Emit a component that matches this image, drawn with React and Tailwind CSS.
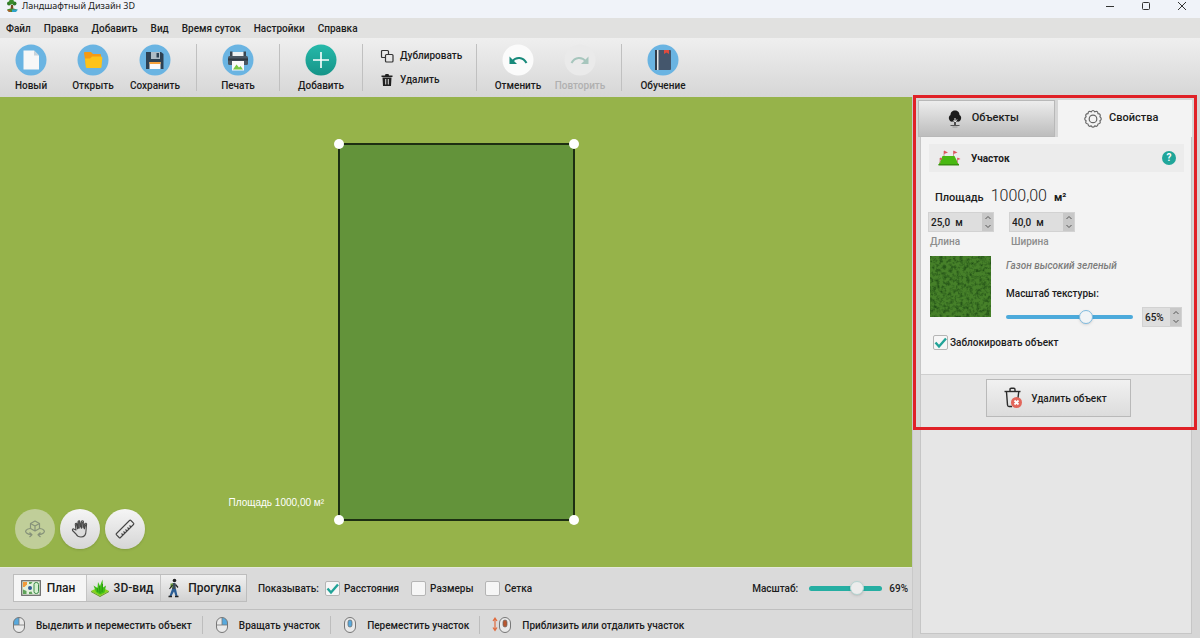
import React, { useState } from "react";

const NewFileIcon = () => (
  <svg viewBox="0 0 32 32" className="w-8 h-8" aria-hidden="true">
    <circle cx="16" cy="16" r="15.5" fill="#6ab4e2" />
    <path d="M8.500 6.500h10.500l5 5v14H8.500z" fill="#f7f7f7" />
    <path d="M19 6.500l5 5h-5z" fill="#c9d3da" />
  </svg>
);

const OpenIcon = () => (
  <svg viewBox="0 0 32 32" className="w-8 h-8" aria-hidden="true">
    <circle cx="16" cy="16" r="15.5" fill="#6ab4e2" />
    <path d="M7 9q0-1 1-1h6l2 2h7q1 0 1 1v11H9z" fill="#f59a12" />
    <path d="M8 14.500h5l2-2h9q1.500 0 1.300 1.500L24.500 23q-.2 1-1 1H10q-1 0-1.200-1z" fill="#fdc319" />
  </svg>
);

const SaveIcon = () => (
  <svg viewBox="0 0 32 32" className="w-8 h-8" aria-hidden="true">
    <circle cx="16" cy="16" r="15.5" fill="#6ab4e2" />
    <path d="M7 8h15l2.500 2v15H7z" fill="#2d4152" />
    <path d="M12 8h9v7h-9z" fill="#aebcc5" />
    <path d="M17.500 9H20v4.500h-2.500z" fill="#2d4152" />
    <path d="M10.500 18h11v7h-11z" fill="#fafafa" />
    <path d="M10.500 18h11v2h-11z" fill="#f5a13c" />
  </svg>
);

const PrintIcon = () => (
  <svg viewBox="0 0 32 32" className="w-8 h-8" aria-hidden="true">
    <circle cx="16" cy="16" r="15.5" fill="#6ab4e2" />
    <path d="M10 8h12v5H10z" fill="#eef1f2" />
    <path d="M8 7.500h2.500v5H8zM21.500 7.500H24v5h-2.500z" fill="#3a4651" />
    <rect x="6" y="12" width="20" height="9" rx="1.500" fill="#4a5763" />
    <path d="M6 14.500h20v2H6z" fill="#2d3740" />
    <path d="M10 17h12v9.500H10z" fill="#fbfbfb" />
    <path d="M11 25.500l3.500-5 2.500 3 1.500-1.500 2.500 3.500z" fill="#7ac943" />
  </svg>
);

const AddIcon = () => (
  <svg viewBox="0 0 32 32" className="w-8 h-8" aria-hidden="true">
    <defs>
      <linearGradient id="addFill" x1="0" y1="0" x2="0" y2="1">
        <stop offset="0" stopColor="#26b9aa" />
        <stop offset="1" stopColor="#159488" />
      </linearGradient>
    </defs>
    <circle cx="16" cy="16" r="15.5" fill="url(#addFill)" />
    <path d="M16 8v16M8 16h16" stroke="#fff" strokeWidth="1.600" />
  </svg>
);

const UndoIcon = () => (
  <svg viewBox="0 0 32 32" className="w-8 h-8" aria-hidden="true">
    <circle cx="16" cy="16" r="15.5" fill="#fbfbfb" />
    <path d="M10 17.500c4-5 11-5 14.500 1.500" fill="none" stroke="#17897a" strokeWidth="2" />
    <path d="M7.500 12.500v7.500H15z" fill="#17897a" />
  </svg>
);

const RedoIcon = () => (
  <svg viewBox="0 0 32 32" className="w-8 h-8" aria-hidden="true">
    <circle cx="16" cy="16" r="15.5" fill="#eaeaea" />
    <path d="M22 17.500c-4-5-11-5-14.500 1.500" fill="none" stroke="#a7c6bd" strokeWidth="2" />
    <path d="M24.500 12.500v7.500H17z" fill="#a7c6bd" />
  </svg>
);

const BookIcon = () => (
  <svg viewBox="0 0 32 32" className="w-8 h-8" aria-hidden="true">
    <circle cx="16" cy="16" r="15.5" fill="#6ab4e2" />
    <rect x="8" y="6" width="16" height="20" rx="1" fill="#44566c" />
    <path d="M8 6h2v20H8z" fill="#323d4a" />
    <path d="M10 6h1.500v20H10z" fill="#e6e6e6" />
    <path d="M17 6h5v4l-2.500-1.500L17 10z" fill="#df4b3e" />
  </svg>
);

const LogoIcon = () => (
  <svg viewBox="0 0 14 14" className="w-3.5 h-3.5" aria-hidden="true">
    <path d="M6 6h2l.5 5h-3z" fill="#7a4a21" />
    <circle cx="4" cy="4.500" r="2" fill="#2f7a26" />
    <circle cx="9.500" cy="4.500" r="2" fill="#2f7a26" />
    <circle cx="6.500" cy="3" r="2.500" fill="#3a8c2c" />
    <path d="M2 10.500q5-2 10 0l-2 2.500H4z" fill="#4a8a2a" />
    <path d="M7 10.500h6l-2 2.500H7z" fill="#2ea3c9" />
    <path d="M2 11h3l1 2H4z" fill="#a5642b" />
  </svg>
);

const DuplicateIcon = () => (
  <svg viewBox="0 0 14 14" className="w-3.5 h-3.5" fill="none" stroke="#333" strokeWidth="1.200" aria-hidden="true">
    <path d="M5.500 8.500H2.500q-1 0-1-1v-5q0-1 1-1h5q1 0 1 1v3" />
    <rect x="5.500" y="5.500" width="7.500" height="7.500" rx="1" />
  </svg>
);

const TrashIcon = () => (
  <svg viewBox="0 0 14 14" className="w-3.5 h-3.5" fill="#1f1f1f" aria-hidden="true">
    <path d="M1.500 2.500h3.500L5.500 1h3l.5 1.500h3.500V4h-11z" />
    <path fillRule="evenodd" d="M2.500 4.500h9L11 13H3zM5.200 6v5.500h1V6zM7.800 6v5.500h1V6z" />
  </svg>
);

const TreeIcon = () => (
  <svg viewBox="0 0 18 20" className="w-[18px] h-5" aria-hidden="true">
    <path d="M9 1.500c3.500 0 4.500 2.500 4.500 4.500 1.500 1 2 2.500 1.500 4-.5 2-2 3-4 2.500H7C5 13 3.500 12 3 10c-.5-1.500 0-3 1.500-4 0-2 1-4.500 4.500-4.500z" fill="#1d1d1d" />
    <path d="M9 16.500V9M9 13l2-2.500M9 12.500L7.500 11" stroke="#f0f0f0" strokeWidth="1" />
    <path d="M9 17v-4" stroke="#1d1d1d" strokeWidth="1.500" />
    <path d="M4.500 16.500h9" stroke="#555" strokeWidth="1" />
    <path d="M6.500 18h5" stroke="#999" strokeWidth="1" />
  </svg>
);

const GearIcon = () => (
  <svg viewBox="0 0 20 20" className="w-5 h-5" fill="none" stroke="#666" strokeWidth="1.200" aria-hidden="true">
    <path
      d="M8.200 2.800Q10 .200 11.800 2.800 14.700 1.400 15 4.600 18.200 4.800 16.900 7.800 19.600 10 16.900 11.700 18.200 14.800 15 15 14.700 18.200 11.800 16.900 10 19.600 8.200 16.900 5.300 18.200 5 15 1.800 14.800 3.100 11.700.4 10 3.100 7.800 1.800 4.800 5 4.600 5.300 1.400 8.200 2.800z"
      strokeLinejoin="round"
    />
    <circle cx="10" cy="9.900" r="3.800" />
  </svg>
);

const PlotIcon = () => (
  <svg viewBox="0 0 24 18" className="w-6 h-[18px]" aria-hidden="true">
    <path d="M5.500 7h12l4.500 9H1.500z" fill="#49b812" />
    <path d="M1.500 15H22v1.500H1.500z" fill="#389010" />
    <path d="M7 7V2M16.500 7V2M3 14V9M20.500 14V9" stroke="#c98080" strokeWidth=".8" />
    <path d="M7 1.500l4 2-4 1.500zM16.500 1.500l4 2-4 1.500zM3 8.500l3 1.500-3 1zM20.500 8.500l3 1.500-3 1z" fill="#e0525e" />
  </svg>
);

const DeleteObjectIcon = () => (
  <svg viewBox="0 0 20 22" className="w-5 h-[22px]" aria-hidden="true">
    <g fill="none" stroke="#2b2b2b" strokeWidth="1.400">
      <path d="M1.500 4.500h16" />
      <path d="M7 4V2.500Q7 1.300 8.200 1.300h2.600Q12 1.300 12 2.500V4" />
      <path d="M3.500 5l1 13q.1 1.500 1.500 1.500h3M15.700 5L15 11" />
    </g>
    <circle cx="13.500" cy="15.500" r="5.500" fill="#e2665b" />
    <path d="M11.500 13.500l4 4M15.500 13.500l-4 4" stroke="#fff" strokeWidth="1.800" />
  </svg>
);

const OrbitIcon = () => (
  <svg viewBox="0 0 24 24" className="w-6 h-6" fill="none" stroke="#86927a" strokeWidth="1.200" strokeLinejoin="round" aria-hidden="true">
    <path d="M12 4l4.500 2.500v5L12 14l-4.500-2.500v-5zM7.500 6.500L12 9l4.500-2.500M12 9v5" />
    <path d="M7 11.500c-4 .5-5.500 3-3.500 4.500 1.200 1 3 1.500 5 1.700M6.500 15.500L9 17.700 6.500 20" />
    <path d="M17 11.500c4 .5 5.500 3 3.500 4.500-1.200 1-3 1.500-5 1.700M17.500 15.500L15 17.700l2.500 2.300" />
  </svg>
);

const HandIcon = () => (
  <svg viewBox="0 0 20 20" className="w-5 h-5" strokeLinecap="round" strokeLinejoin="round" aria-hidden="true">
    <path
      d="M6 11L5.300 5.500q0-1.500 1.400-1.200L8 8.500 8 3q.2-1.400 1.600-1.200L10.500 8l.9-5.500q.8-1.300 2-.3L13.200 8.500 15 4.500q1.200-.8 1.600.5L16 12c0 4-2 6-5 6-2.500 0-4-1-5-3l-3.500-3.500c-.5-1.500.8-2 1.800-1.300z"
      fill="#dcdcdc"
      stroke="#4c4c4c"
      strokeWidth="1.100"
    />
    <path d="M6.800 5.500l.8 4M9 3v6M12.200 3.500L11.500 9M15.300 6L14.300 9.500" stroke="#444" strokeWidth="1.500" />
  </svg>
);

const RulerIcon = () => (
  <svg viewBox="0 0 22 22" className="w-[22px] h-[22px]" fill="none" stroke="#444" strokeWidth="1.100" aria-hidden="true">
    <path d="M2.500 15.500l13-13q.7-.7 1.400 0l2.600 2.600q.7.700 0 1.400l-13 13q-.7.700-1.400 0l-2.600-2.600q-.7-.7 0-1.400z" />
    <path d="M17 9l-1.500-1.500M15 11l-1.500-1.500M13 13l-1.500-1.500M11 15l-1.500-1.500M9 17l-1.500-1.500" />
  </svg>
);

const PlanIcon = () => (
  <svg viewBox="0 0 20 16" className="w-5 h-4" aria-hidden="true">
    <rect x=".7" y=".7" width="18.600" height="14.600" fill="#e3f0dd" stroke="#666" strokeWidth="1.200" />
    <path d="M2 2h4v2.500L3.500 7H2z" fill="#f19a3a" />
    <path d="M2 9.500l3.500 1.500v3H2zM8 2h3.500L10 4H8zM8 12l2.500-.5 1 2.500H8z" fill="#5fa35a" />
    <circle cx="9" cy="8" r="2" fill="#2f5b94" />
    <rect x="13" y="2.500" width="4.500" height="11" rx="2" fill="#d5f0d0" stroke="#3d8a4a" />
  </svg>
);

const GrassIcon = () => (
  <svg viewBox="0 0 20 20" className="w-5 h-5" aria-hidden="true">
    <path d="M1 13l9-4.500 9 4.500-9 5z" fill="#86d51b" />
    <path d="M1 13l9 5 9-5v1l-9 5-9-5z" fill="#5e9a1c" />
    <path d="M6 14L3.500 7.500 7.500 10l.5-6 2 4 2.500-6.500.5 8 3-2-1.500 7-4.500 2z" fill="#3fc016" />
    <path d="M10 15l-.5-7M12 14l.5-8M8 14L7 10" stroke="#27900f" strokeWidth=".9" />
  </svg>
);

const WalkIcon = () => (
  <svg viewBox="0 0 14 20" className="w-3.5 h-5" aria-hidden="true">
    <circle cx="8.500" cy="2.500" r="1.800" fill="#222" />
    <path d="M6.500 5H9.500l.3 6H6z" fill="#3a4a58" />
    <path d="M4.500 5.500h2.500v4H4.500z" fill="#6a9a3a" />
    <path d="M6.500 7l-3 4M9.500 6.500l2.500 3" stroke="#222" strokeWidth="1.200" />
    <path d="M6 11h4l1.500 7h-2L8 13.500 5.500 18h-2z" fill="#2b5d94" />
    <path d="M2.500 18.500h3.500M9 18.500h3.500" stroke="#222" strokeWidth="1.500" />
  </svg>
);

function MouseIcon({ part, scroll }) {
  return (
    <svg viewBox={scroll ? "-6 0 20 18" : "0 0 14 18"} className={scroll ? "w-5 h-[18px]" : "w-3.5 h-[18px]"} aria-hidden="true">
      <rect x="1.500" y="1.500" width="11" height="15" rx="5.500" fill="#e9e9e9" />
      {part === "left" && <path d="M7 1.500v7.500H1.500V7A5.500 5.500 0 017 1.500z" fill="#58a9dd" />}
      {part === "right" && <path d="M7 1.500v7.500h5.500V7A5.500 5.500 0 007 1.500z" fill="#58a9dd" />}
      <rect x="1.500" y="1.500" width="11" height="15" rx="5.500" fill="none" stroke="#777" />
      {part !== "wheel" && <path d="M1.500 9h11M7 1.500V9" fill="none" stroke="#777" strokeWidth=".8" />}
      {part === "wheel" && <rect x="5" y="4" width="4" height="7" rx="2" fill={scroll ? "#b9562f" : "#58a9dd"} stroke="#666" strokeWidth=".7" />}
      {scroll && <path d="M-3 2.500v11M-5 5l2-3 2 3M-5 11.500l2 3 2-3" fill="none" stroke="#e06a3c" strokeWidth="1.200" />}
    </svg>
  );
}

const MENU = ["Файл", "Правка", "Добавить", "Вид", "Время суток", "Настройки", "Справка"];

const HINTS = [
  { text: "Выделить и переместить объект", part: "left" },
  { text: "Вращать участок", part: "right" },
  { text: "Переместить участок", part: "wheel" },
  { text: "Приблизить или отдалить участок", part: "wheel", scroll: true },
];

function ToolButton({ icon, label, disabled }) {
  return (
    <button disabled={disabled} className={`flex w-[62px] flex-col items-center gap-1 ${disabled ? "text-[#b0b0b0]" : ""}`}>
      {icon}
      <span className="leading-3">{label}</span>
    </button>
  );
}

function CheckBox({ id, label, checked, onChange, gap = "gap-1" }) {
  return (
    <label htmlFor={id} className={`flex items-center ${gap}`}>
      <span className="grid h-[15px] w-[15px]">
        <input
          id={id}
          type="checkbox"
          checked={checked}
          onChange={onChange}
          className="peer [grid-area:1/1] appearance-none rounded-[2px] border border-[#b5b5b5] bg-[#f6f6f6]"
        />
        <svg viewBox="0 0 15 15" className="invisible pointer-events-none [grid-area:1/1] peer-checked:visible" aria-hidden="true">
          <path d="M2.500 7.500l3.500 4 7-8" fill="none" stroke="#22a398" strokeWidth="2.400" />
        </svg>
      </span>
      {label}
    </label>
  );
}

function NumberField({ id, value, width, label }) {
  const [text, setText] = useState(value);
  const step = (delta) => {
    const [number, ...unit] = text.split(/(?=[\s%])/);
    const isPercent = text.includes("%");
    const next = parseFloat(number.replace(",", ".")) + delta;
    setText((isPercent ? String(next) : next.toFixed(1).replace(".", ",")) + unit.join(""));
  };

  return (
    <div className={`flex h-5 ${width} border border-[#d2d2d2] bg-[#dedede]`}>
      <input
        id={id}
        aria-label={label}
        value={text}
        onChange={(e) => setText(e.target.value)}
        className="min-w-0 flex-1 bg-transparent pl-0.5 whitespace-pre outline-none"
      />
      <div className="flex w-[11px] flex-col bg-[#c8c8c8]">
        {[1, -1].map((delta) => (
          <button key={delta} onClick={() => step(delta)} aria-label={delta > 0 ? "Больше" : "Меньше"} className="flex flex-1 items-center justify-center">
            <svg viewBox="0 0 8 5" className="w-2 h-[5px]" fill="none" stroke="#555">
              <path d={delta > 0 ? "M1.500 4L4 1.500 6.500 4" : "M1.500 1L4 3.500 6.500 1"} />
            </svg>
          </button>
        ))}
      </div>
    </div>
  );
}

function Properties() {
  const [textureScale, setTextureScale] = useState(65);
  const [locked, setLocked] = useState(true);

  return (
    <div className="flex flex-1 flex-col border-x border-b border-[#c6c6c6] bg-[#e6e6e6]">
      <div className="h-[237px] bg-[#f3f3f3] px-[7px] pt-[7px]">
        <div className="ml-px flex h-7 items-center bg-[#ececec] px-2">
          <PlotIcon />
          <h2 className="ml-2.5 flex-1 font-bold">Участок</h2>
          <button aria-label="Помощь" className="h-3.5 w-3.5 rounded-full bg-[#20a69a] text-[10px] leading-[14px] font-bold text-white">?</button>
        </div>

        <div className="mt-3 flex items-baseline gap-[7px] pl-[7px] text-[11px]">
          <span>Площадь</span>
          <span className="text-base leading-6 font-light">1000,00</span>
          <span className="font-bold">м²</span>
        </div>

        <div className="mt-1 flex gap-[15px]">
          <div>
            <NumberField id="length" value="25,0  м" width="w-[66px]" />
            <label htmlFor="length" className="mt-1 block pl-0.5 leading-3 text-[#8d8d8d]">Длина</label>
          </div>
          <div>
            <NumberField id="width" value="40,0  м" width="w-[66px]" />
            <label htmlFor="width" className="mt-1 block pl-0.5 leading-3 text-[#8d8d8d]">Ширина</label>
          </div>
        </div>

        <div className="mt-2 flex gap-[15px] pl-0.5">
          <button aria-label="Текстура" className="h-[61px] w-[61px]">
            <svg viewBox="0 0 61 61" className="h-full w-full">
              <defs>
                <filter id="grass" x="0" y="0" width="1" height="1" colorInterpolationFilters="sRGB">
                  <feTurbulence type="fractalNoise" baseFrequency=".3" numOctaves="3" seed="4" />
                  <feColorMatrix values="0 0 0 0 .12  0 0 0 0 .3  0 0 0 0 .08  2.200 0 0 0 -.9" />
                </filter>
              </defs>
              <rect width="61" height="61" fill="#468029" />
              <rect width="61" height="61" filter="url(#grass)" />
            </svg>
          </button>
          <div className="min-w-0 flex-1">
            <p className="pt-1 leading-3 text-[#7d7d7d] italic">Газон высокий зеленый</p>
            <label htmlFor="texture" className="mt-4 block leading-3">Масштаб текстуры:</label>
            <div className="mt-[7px] flex items-center justify-between pr-0.5">
              <input
                id="texture"
                type="range"
                value={textureScale}
                onChange={(e) => setTextureScale(Number(e.target.value))}
                className="h-1 w-[127px] appearance-none rounded-full bg-[#4caadb] [&::-webkit-slider-thumb]:h-3.5 [&::-webkit-slider-thumb]:w-3.5 [&::-webkit-slider-thumb]:appearance-none [&::-webkit-slider-thumb]:rounded-full [&::-webkit-slider-thumb]:border [&::-webkit-slider-thumb]:border-[#7fbbdf] [&::-webkit-slider-thumb]:bg-[#f1f4f6] [&::-webkit-slider-thumb]:shadow"
              />
              <NumberField value="65%" width="w-10" label="Масштаб текстуры, %" />
            </div>
          </div>
        </div>

        <div className="mt-2 flex pl-[5px]">
          <CheckBox id="lock" label="Заблокировать объект" checked={locked} onChange={(e) => setLocked(e.target.checked)} gap="gap-0.5" />
        </div>
      </div>

      <div className="flex justify-center border-t border-[#cfcfcf] pt-1 pl-1">
        <button className="flex h-[38px] w-[145px] items-center justify-center gap-2 border border-[#b9b9b9] bg-gradient-to-b from-[#f1f1f1] to-[#dcdcdc] pr-1.5">
          <DeleteObjectIcon />
          Удалить объект
        </button>
      </div>
    </div>
  );
}

function Plan() {
  return (
    <div className="relative flex-1 overflow-hidden bg-[#96b34a]">
      <div className="absolute top-[46px] left-[338px] h-[378px] w-[237px] border-2 border-[#1d2f12] bg-[#63933a]">
        <span className="absolute -top-1.5 -left-1.5 h-2.5 w-2.5 rounded-full bg-white" />
        <span className="absolute -top-1.5 -right-1.5 h-2.5 w-2.5 rounded-full bg-white" />
        <span className="absolute -bottom-1.5 -left-1.5 h-2.5 w-2.5 rounded-full bg-white" />
        <span className="absolute -right-1.5 -bottom-1.5 h-2.5 w-2.5 rounded-full bg-white" />
        <span className="absolute right-full bottom-2.5 mr-4 font-['Liberation_Sans',sans-serif] leading-3 font-normal whitespace-nowrap text-white">
          Площадь 1000,00 м²
        </span>
      </div>

      <div className="absolute bottom-[18px] left-[15px] flex gap-[5px]">
        <button disabled aria-label="Орбита" className="flex h-10 w-10 items-center justify-center rounded-full bg-[#c0ce99]">
          <OrbitIcon />
        </button>
        <button aria-label="Рука" className="flex h-10 w-10 items-center justify-center rounded-full bg-gradient-to-b from-[#f5f5f5] to-[#d6d6d6] shadow">
          <HandIcon />
        </button>
        <button aria-label="Линейка" className="flex h-10 w-10 items-center justify-center rounded-full bg-gradient-to-b from-[#f5f5f5] to-[#d6d6d6] shadow">
          <RulerIcon />
        </button>
      </div>
    </div>
  );
}

function ViewBar() {
  const [show, setShow] = useState({ distances: true, sizes: false, grid: false });
  const [zoom, setZoom] = useState(69);
  const toggle = (key) => setShow((prev) => ({ ...prev, [key]: !prev[key] }));

  return (
    <div className="flex h-[42px] items-center border-t border-[#e4e8dc] bg-[#dadada] pr-1 pb-px pl-[13px]">
      <div className="flex h-7 border border-[#bdbdbd] text-xs">
        <button className="flex w-[72px] items-center justify-center gap-1.5 bg-[#f5f5f5] pr-1">
          <PlanIcon /> План
        </button>
        <button className="flex w-[74px] items-center justify-center gap-1 border-l border-[#c4c4c4] bg-gradient-to-b from-[#f0f0f0] to-[#d2d2d2] pr-1">
          <GrassIcon /> 3D-вид
        </button>
        <button className="flex w-[86px] items-center justify-center gap-2 border-l border-[#c4c4c4] bg-gradient-to-b from-[#f0f0f0] to-[#d2d2d2]">
          <WalkIcon /> Прогулка
        </button>
      </div>

      <span className="mr-1.5 ml-[11px]">Показывать:</span>
      <div className="flex gap-3">
        <CheckBox id="distances" label="Расстояния" checked={show.distances} onChange={() => toggle("distances")} />
        <CheckBox id="sizes" label="Размеры" checked={show.sizes} onChange={() => toggle("sizes")} />
        <CheckBox id="grid" label="Сетка" checked={show.grid} onChange={() => toggle("grid")} />
      </div>

      <label htmlFor="zoom" className="mr-[11px] ml-auto">Масштаб:</label>
      <input
        id="zoom"
        type="range"
        value={zoom}
        onChange={(e) => setZoom(Number(e.target.value))}
        className="h-[5px] w-[73px] appearance-none rounded-full bg-[#25aea2] [&::-webkit-slider-thumb]:h-3.5 [&::-webkit-slider-thumb]:w-3.5 [&::-webkit-slider-thumb]:appearance-none [&::-webkit-slider-thumb]:rounded-full [&::-webkit-slider-thumb]:border [&::-webkit-slider-thumb]:border-[#b5d5d2] [&::-webkit-slider-thumb]:bg-[#ececec] [&::-webkit-slider-thumb]:shadow"
      />
      <span className="ml-[7px]">{zoom}%</span>
    </div>
  );
}

export default function App() {
  return (
    <div className="relative flex min-h-screen flex-col bg-[#d9d9d9] font-[Roboto,'Noto_Sans',sans-serif] text-[10px] font-medium text-[#1c1c1c]">
      {/* Title bar */}
      <header className="flex h-[18px] items-center bg-[#f0f3f9] pr-[13px] pb-1.5 pl-[5px]">
        <LogoIcon />
        <h1 className="ml-[3px] flex-1 font-['Noto_Sans',sans-serif] text-[9px] leading-3 font-normal">Ландшафтный Дизайн 3D</h1>
        <div className="flex gap-[26px]">
          <button aria-label="Свернуть">
            <svg viewBox="0 0 10 10" className="w-2.5 h-2.5" stroke="#333"><path d="M1 5.500h8" /></svg>
          </button>
          <button aria-label="Развернуть">
            <svg viewBox="0 0 10 10" className="w-2.5 h-2.5" fill="none" stroke="#333"><rect x="1.500" y="1.500" width="7" height="7" rx="1" /></svg>
          </button>
          <button aria-label="Закрыть">
            <svg viewBox="0 0 10 10" className="w-2.5 h-2.5" stroke="#333"><path d="M1 1l8 8M9 1L1 9" /></svg>
          </button>
        </div>
      </header>

      {/* Menu */}
      <nav className="flex h-5 items-center gap-[13px] bg-[#e1e1e0] pl-1.5">
        {MENU.map((item) => (
          <button key={item}>{item}</button>
        ))}
      </nav>

      {/* Toolbar */}
      <div className="flex h-[59px] bg-gradient-to-b from-[#efefef] to-[#d6d6d6] py-[6px]">
        <div className="flex items-start border-r border-[#c0c0c0] pr-2.5">
          <ToolButton icon={<NewFileIcon />} label="Новый" />
          <ToolButton icon={<OpenIcon />} label="Открыть" />
          <ToolButton icon={<SaveIcon />} label="Сохранить" />
        </div>
        <div className="flex items-start border-r border-[#c0c0c0] px-2.5">
          <ToolButton icon={<PrintIcon />} label="Печать" />
        </div>
        <div className="flex items-start border-r border-[#c0c0c0] px-2.5">
          <ToolButton icon={<AddIcon />} label="Добавить" />
        </div>
        <div className="flex w-[114px] flex-col gap-2.5 border-r border-[#c0c0c0] pt-[5px] pl-[17px]">
          <button className="flex items-center gap-1.5 leading-3"><DuplicateIcon />Дублировать</button>
          <button className="flex items-center gap-1.5 leading-3"><TrashIcon />Удалить</button>
        </div>
        <div className="flex items-start border-r border-[#c0c0c0] px-2.5">
          <ToolButton icon={<UndoIcon />} label="Отменить" />
          <ToolButton icon={<RedoIcon />} label="Повторить" disabled />
        </div>
        <div className="flex items-start px-2.5">
          <ToolButton icon={<BookIcon />} label="Обучение" />
        </div>
      </div>

      <div className="flex flex-1">
        <main className="flex min-w-0 flex-1 flex-col">
          <Plan />
          <ViewBar />
          {/* Mouse hints */}
          <footer className="flex h-[29px] items-center border-t border-[#bfbfbf] bg-[#dadada] pt-0.5 pl-3">
            {HINTS.map((hint, i) => (
              <div key={hint.text} className={`flex items-center gap-2.5 ${i > 0 ? "ml-2.5 border-l border-[#bdbdbd] pl-3" : ""}`}>
                <MouseIcon part={hint.part} scroll={hint.scroll} />
                {hint.text}
              </div>
            ))}
          </footer>
        </main>

        <aside className="relative flex w-72 flex-col border-l border-[#c9c9c9] bg-[#d6d6d6] pt-[3px] pr-2 pb-1 pl-[7px]">
          <div role="tablist" className="-ml-0.5 flex h-[37px] gap-[3px] text-[11px]">
            <button role="tab" aria-selected="false" className="flex flex-1 items-center justify-center gap-2 border border-[#b8b8b8] bg-gradient-to-b from-[#ededed] to-[#bdbdbd] pr-2">
              <TreeIcon /> Объекты
            </button>
            <button role="tab" aria-selected="true" className="flex flex-1 items-center justify-center gap-1.5 bg-[#f3f3f3] pr-2">
              <GearIcon /> Свойства
            </button>
          </div>
          <Properties />
          {/* Highlight frame */}
          <div className="pointer-events-none absolute -top-0.5 right-[3px] left-0 h-[335px] border-[3px] border-[#e02127]" />
        </aside>
      </div>
    </div>
  );
}
